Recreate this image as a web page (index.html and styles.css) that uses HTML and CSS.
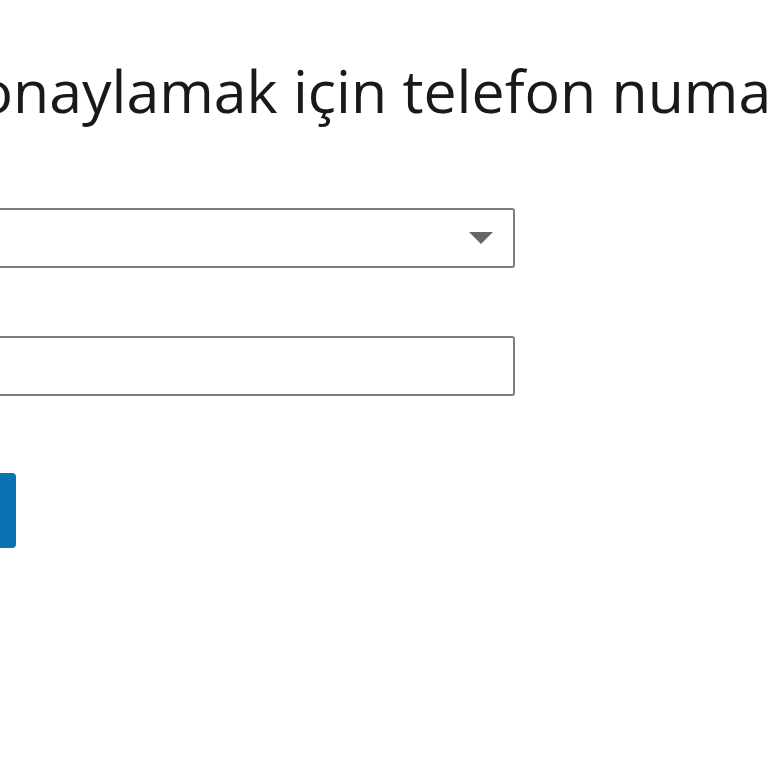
FILE: index.html
```html
<!DOCTYPE html>
<html lang="tr">
<head>
<meta charset="utf-8">
<title>Telefon numarası</title>
<link rel="stylesheet" href="styles.css">
</head>
<body>
<main class="page">
  <h1 class="title">Hesabınızı onaylamak için telefon numaranızı girin</h1>
  <form class="form">
    <div class="field select-field">
      <span class="select-value"></span>
      <svg class="caret" width="24" height="12" viewBox="0 0 24 12"><path d="M0 0 H24 L12 12 Z" fill="#666"/></svg>
    </div>
    <div class="field input-field"></div>
    <button type="button" class="btn">Gönder</button>
  </form>
</main>
</body>
</html>
```

FILE: styles.css
```css
html, body {
  margin: 0;
  padding: 0;
  background: #fff;
  overflow: hidden;
  width: 768px;
  height: 768px;
}
.page {
  margin-left: -560px;
  font-family: "Open Sans", "Noto Sans", sans-serif;
  color: rgba(0, 0, 0, 0.9);
}
.title {
  margin: 0 0 0 240px;
  padding-top: 54px;
  font-size: 59px;
  font-weight: 400;
  line-height: 72px;
  white-space: nowrap;
}
.form {
  display: flex;
  flex-direction: column;
  align-items: flex-start;
  width: 1075px;
  margin-top: 82px;
}
.field {
  box-sizing: border-box;
  width: 100%;
  height: 60px;
  border: 2px solid #7d7d7d;
  border-radius: 3px;
  display: flex;
  align-items: center;
  justify-content: flex-end;
}
.caret {
  margin-right: 20px;
}
.input-field {
  margin-top: 68px;
}
.btn {
  margin-top: 77px;
  height: 75px;
  width: 576px;
  border: none;
  border-radius: 4px;
  background: #0a72b1;
  color: #fff;
  font-family: inherit;
  font-size: 30px;
}
```
